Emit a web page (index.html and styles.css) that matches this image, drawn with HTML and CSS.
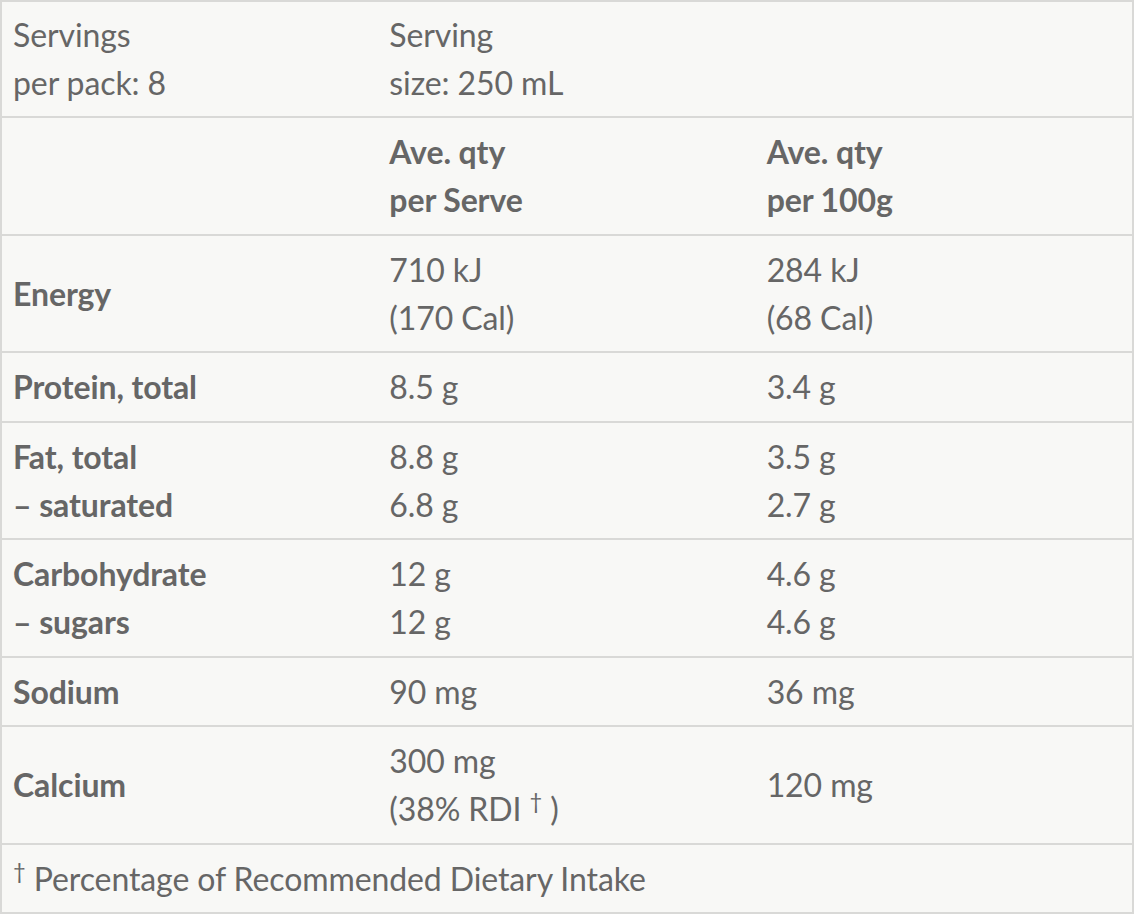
FILE: index.html
```html
<!DOCTYPE html>
<html lang="en">
<head>
<meta charset="utf-8">
<title>Nutrition Information</title>
<link rel="stylesheet" href="styles.css">
</head>
<body>
<table class="nutrition">
  <colgroup><col class="c"><col class="c"><col class="c"></colgroup>
  <tbody>
    <tr class="top">
      <td>Servings<br>per pack: 8</td>
      <td>Serving<br>size: 250 mL</td>
      <td></td>
    </tr>
    <tr class="head">
      <td></td>
      <th>Ave. qty<br>per Serve</th>
      <th>Ave. qty<br>per 100g</th>
    </tr>
    <tr>
      <th>Energy</th>
      <td>710 kJ<br>(170 Cal)</td>
      <td>284 kJ<br>(68 Cal)</td>
    </tr>
    <tr>
      <th>Protein, total</th>
      <td>8.5 g</td>
      <td>3.4 g</td>
    </tr>
    <tr>
      <th>Fat, total<br>– saturated</th>
      <td>8.8 g<br>6.8 g</td>
      <td>3.5 g<br>2.7 g</td>
    </tr>
    <tr>
      <th>Carbohydrate<br>– sugars</th>
      <td>12 g<br>12 g</td>
      <td>4.6 g<br>4.6 g</td>
    </tr>
    <tr>
      <th>Sodium</th>
      <td>90 mg</td>
      <td>36 mg</td>
    </tr>
    <tr>
      <th>Calcium</th>
      <td>300 mg<br>(38% RDI <sup>†</sup> )</td>
      <td>120 mg</td>
    </tr>
    <tr class="foot">
      <td colspan="3"><sup>†</sup> Percentage of Recommended Dietary Intake</td>
    </tr>
  </tbody>
</table>
</body>
</html>
```
FILE: styles.css
```css
html, body {
  margin: 0;
  padding: 0;
  background: #ffffff;
}

.nutrition {
  width: 1134px;
  border-collapse: collapse;
  table-layout: fixed;
  background: #f8f8f6;
  border: 2px solid #d9d9d7;
  font-family: Lato, "Open Sans", sans-serif;
  font-size: 32px;
  line-height: 48px;
  color: #666666;
}

.nutrition .c {
  width: 33.333%;
}

.nutrition td,
.nutrition th {
  border-top: 2px solid #d9d9d7;
  border-bottom: 2px solid #d9d9d7;
  padding: 10px 11px 9.5px 11px;
  text-align: left;
  vertical-align: middle;
  font-weight: 400;
  letter-spacing: -0.1px;
}

.nutrition th {
  font-weight: 700;
}

.nutrition .top td {
  vertical-align: top;
  padding-top: 9px;
  padding-bottom: 9px;
}

.nutrition sup {
  font-size: 22px;
  line-height: 0;
  vertical-align: 12px;
}
```
